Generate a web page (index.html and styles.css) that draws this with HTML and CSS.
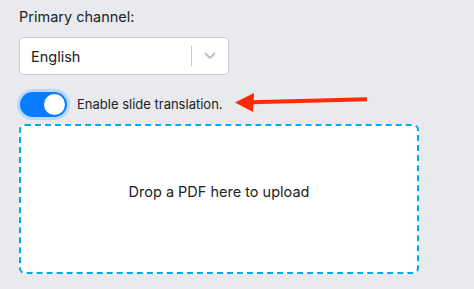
FILE: index.html
```html
<!DOCTYPE html>
<html>
<head>
<meta charset="utf-8">
<link rel="stylesheet" href="styles.css">
</head>
<body>
<div class="page">
  <div class="label">Primary channel:</div>
  <div class="select">
    <span class="select-value">English</span>
    <span class="select-sep"></span>
    <span class="select-chev">
      <svg width="12" height="8" viewBox="0 0 12 8"><path d="M1.5 1.5 L6 6 L10.5 1.5" fill="none" stroke="#c2c2c2" stroke-width="2" stroke-linecap="round" stroke-linejoin="round"/></svg>
    </span>
  </div>
  <div class="toggle-row">
    <span class="toggle"><span class="knob"></span></span>
    <span class="toggle-label">Enable slide translation.</span>
  </div>
  <div class="dropzone">Drop a PDF here to upload</div>
  <svg class="arrow" width="140" height="24" viewBox="0 0 140 24">
    <path d="M133 6.3 L18 9.2" stroke="#ff2a00" stroke-width="4" stroke-linecap="butt" fill="none"/>
    <path d="M1 9.5 L20 0 L19 19 Z" fill="#ff2a00"/>
  </svg>
</div>
</body>
</html>
```
FILE: styles.css
```css
html, body {
  margin: 0;
  padding: 0;
  background: #e9eaee;
}
.page {
  position: relative;
  padding: 7px 0 0 19px;
  font-family: Inter, "Liberation Sans", sans-serif;
  color: #212529;
}
.label {
  font-size: 14.5px;
  line-height: 20px;
  height: 20px;
}
.select {
  margin-top: 10px;
  width: 208px;
  height: 36px;
  border: 1px solid #cccccc;
  border-radius: 4px;
  background: #fff;
  display: flex;
  align-items: center;
  box-sizing: content-box;
}
.select-value {
  flex: 1;
  padding-left: 11px;
  font-size: 14.5px;
  color: #222;
}
.select-sep {
  width: 1px;
  height: 20px;
  background: #cccccc;
}
.select-chev {
  width: 36px;
  display: flex;
  justify-content: center;
  align-items: center;
}
.toggle-row {
  margin-top: 16px;
  display: flex;
  align-items: center;
  height: 26px;
}
.toggle {
  margin-left: 1px;
  width: 47px;
  height: 25px;
  border-radius: 13px;
  background: #0a7cff;
  box-shadow: 0 0 0 3px #b6d9fd;
  display: flex;
  align-items: center;
  justify-content: flex-end;
  padding-right: 2px;
  box-sizing: border-box;
}
.knob {
  width: 21px;
  height: 21px;
  border-radius: 50%;
  background: #fff;
}
.toggle-label {
  margin-left: 10px;
  font-size: 13px;
  color: #222;
}
.dropzone {
  margin-top: 7px;
  width: 400px;
  height: 150px;
  box-sizing: border-box;
  border: 2px dashed #00aaee;
  border-radius: 6px;
  background: #fff;
  display: flex;
  align-items: center;
  justify-content: center;
  font-size: 14.5px;
  color: #222;
  padding-bottom: 16px;
}
.arrow {
  position: absolute;
  left: 234px;
  top: 93px;
}
```
